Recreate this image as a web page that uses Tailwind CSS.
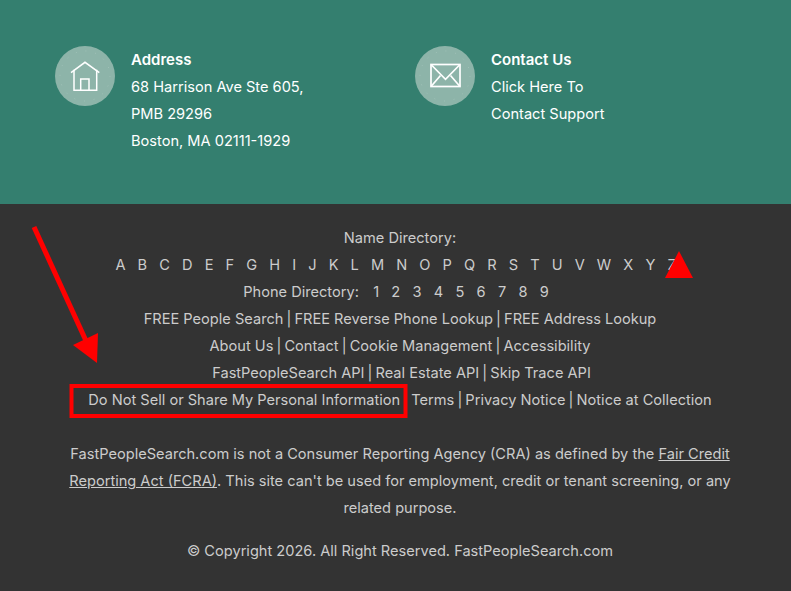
<!DOCTYPE html>
<html lang="en">
<head>
  <meta charset="UTF-8" />
  <meta name="viewport" content="width=device-width, initial-scale=1.0" />
  <title>FastPeopleSearch footer</title>
  <script src="https://cdn.jsdelivr.net/npm/@tailwindcss/browser@4"></script>
</head>
<body class="relative h-[591px] w-[791px] overflow-hidden bg-[#333333] font-['Inter',sans-serif] text-[14.6px] leading-[27px] text-[#cccccc]">
  <!-- contact band -->
  <section class="flex h-[204px] bg-[#347f6f] pl-[55px] pt-[46px] text-white">
    <div class="flex w-[360px] gap-4">
      <div class="h-[60px] w-[60px] shrink-0 rounded-full bg-[#8db4a9]">
        <svg viewBox="0 0 60 60" class="h-[60px] w-[60px]" fill="none" stroke="white" stroke-width="1.5">
          <circle cx="30" cy="30" r="25" stroke-width="0.6" stroke-dasharray="0.8 9" opacity="0.35" />
          <path d="M16 26.7 30 16.3 44.3 26.7" />
          <path d="M19 23.8V44.3H41.7V23.8" />
          <path d="M25.7 44.3V33H34V44.3" />
        </svg>
      </div>
      <div>
        <div class="h-[28px] text-[15px] font-semibold">Address</div>
        <div>68 Harrison Ave Ste 605,</div>
        <div>PMB 29296</div>
        <div>Boston, MA 02111-1929</div>
      </div>
    </div>
    <div class="flex w-[360px] gap-4">
      <div class="h-[60px] w-[60px] shrink-0 rounded-full bg-[#8db4a9]">
        <svg viewBox="0 0 60 60" class="h-[60px] w-[60px]" fill="none" stroke="white" stroke-width="1.7">
          <circle cx="30" cy="30" r="25" stroke-width="0.6" stroke-dasharray="0.8 9" opacity="0.35" />
          <rect x="16" y="18.5" width="29" height="22" />
          <path d="M16 18.5 30.5 33.3 45 18.5" />
          <path d="M16 40.5 25.5 29.5M45 40.5 35.5 29.5" />
        </svg>
      </div>
      <div>
        <div class="h-[28px] text-[15px] font-semibold">Contact Us</div>
        <div>Click Here To</div>
        <div>Contact Support</div>
      </div>
    </div>
  </section>

  <!-- links and legal text -->
  <footer class="flex flex-col items-center pl-[9px] pt-[21px] text-center">
    <div>Name Directory:</div>
    <div class="mr-2 flex gap-[12.1px]">
      <a>A</a><a>B</a><a>C</a><a>D</a><a>E</a><a>F</a><a>G</a><a>H</a><a>I</a><a>J</a><a>K</a><a>L</a><a>M</a><a>N</a><a>O</a><a>P</a><a>Q</a><a>R</a><a>S</a><a>T</a><a>U</a><a>V</a><a>W</a><a>X</a><a>Y</a><a>Z</a>
    </div>
    <div class="mr-2 flex gap-[12.25px]">
      <span class="mr-[2px]">Phone Directory:</span>
      <a>1</a><a>2</a><a>3</a><a>4</a><a>5</a><a>6</a><a>7</a><a>8</a><a>9</a>
    </div>
    <div>FREE People Search <span class="-mx-px">|</span> FREE Reverse Phone Lookup <span class="-mx-px">|</span> FREE Address Lookup</div>
    <div>About Us <span class="-mx-px">|</span> Contact <span class="-mx-px">|</span> Cookie Management <span class="-mx-px">|</span> Accessibility</div>
    <div class="ml-[3px]">FastPeopleSearch API <span class="-mx-px">|</span> Real Estate API <span class="-mx-px">|</span> Skip Trace API</div>
    <div>Do Not Sell or Share My Personal Information <span class="ml-[7px]">Terms</span> <span class="-mx-px">|</span> Privacy Notice <span class="-mx-px">|</span> Notice at Collection</div>
    <p class="mt-[27px] w-[680px]">FastPeopleSearch.com is not a Consumer Reporting Agency (CRA) as defined by the <a class="underline">Fair Credit Reporting Act (FCRA)</a>. This site can't be used for employment, credit or tenant screening, or any related purpose.</p>
    <p class="mt-4">© Copyright 2026. All Right Reserved. FastPeopleSearch.com</p>
  </footer>

  <!-- red annotations drawn over the page -->
  <svg class="absolute left-0 top-0" width="791" height="591" viewBox="0 0 791 591" fill="none">
    <path d="M34 227 87 343" stroke="#ff0000" stroke-width="5" />
    <path d="M73 345 98 333 97 363Z" fill="#ff0000" />
    <path d="M679 251 665 278H693Z" fill="#ff0000" />
    <rect x="71.5" y="386" width="334" height="30" stroke="#ff0000" stroke-width="4" />
  </svg>
</body>
</html>
